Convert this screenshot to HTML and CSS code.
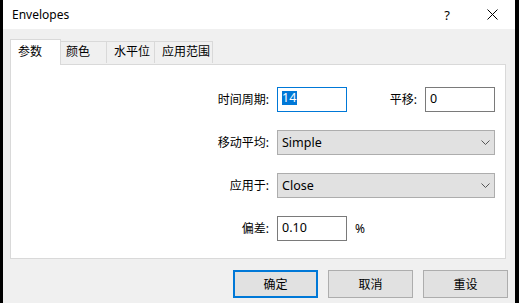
FILE: index.html
```html
<!DOCTYPE html>
<html>
<head>
<meta charset="utf-8">
<link rel="stylesheet" href="styles.css">
</head>
<body>
<div class="dialog">
  <div class="titlebar">
    <span class="title">Envelopes</span>
    <span class="help">?</span>
    <span class="close">
      <svg width="11" height="11" viewBox="0 0 11 11"><path d="M0.5 0.5L10.5 10.5M10.5 0.5L0.5 10.5" stroke="#000" stroke-width="1" fill="none"/></svg>
    </span>
  </div>
  <div class="body">
    <div class="tabs">
      <div class="tab active">参数</div>
      <div class="tab t-color">颜色</div>
      <div class="tab t-level">水平位</div>
      <div class="tab t-range">应用范围</div>
    </div>
    <div class="panel">
      <div class="form">
        <div class="label">时间周期:</div>
        <div class="row-split">
          <div class="input focus"><span class="sel">14</span></div>
          <div class="pair">
            <div class="label">平移:</div>
            <div class="input">0</div>
          </div>
        </div>

        <div class="label">移动平均:</div>
        <div class="select">
          <span>Simple</span>
          <svg width="9" height="5" viewBox="0 0 9 5"><path d="M0.5 0.5L4.5 4.5L8.5 0.5" stroke="#555" stroke-width="1" fill="none"/></svg>
        </div>

        <div class="label">应用于:</div>
        <div class="select">
          <span>Close</span>
          <svg width="9" height="5" viewBox="0 0 9 5"><path d="M0.5 0.5L4.5 4.5L8.5 0.5" stroke="#555" stroke-width="1" fill="none"/></svg>
        </div>

        <div class="label">偏差:</div>
        <div class="row-left">
          <div class="input">0.10</div>
          <span class="unit">%</span>
        </div>
      </div>
    </div>
    <div class="buttons">
      <div class="btn default">确定</div>
      <div class="btn">取消</div>
      <div class="btn">重设</div>
    </div>
  </div>
</div>
</body>
</html>
```

FILE: styles.css
```css
html, body {
  margin: 0;
  padding: 0;
  background: #000;
  height: 303px;
  overflow: hidden;
}
body {
  font-family: "Noto Sans", "Noto Sans CJK SC", sans-serif;
  font-size: 12px;
  color: #000;
}
.dialog {
  margin-left: 3px;
  width: 512px;
  height: 303px;
  background: #f0f0f0;
}
.titlebar {
  height: 29px;
  background: #fff;
  display: flex;
  align-items: center;
}
.title {
  padding-left: 9px;
  flex: 1;
  line-height: 16px;
  padding-top: 1px;
}
.help {
  width: 46px;
  text-align: center;
  font-size: 13px;
  line-height: 16px;
}
.close {
  width: 45px;
  display: flex;
  justify-content: center;
  align-items: center;
}
.body {
  padding: 9px 9px 0 7px;
}
.tabs {
  display: flex;
  align-items: flex-end;
  height: 26px;
}
.tab {
  height: 22px;
  box-sizing: border-box;
  border: 1px solid #d9d9d9;
  border-bottom: none;
  border-left: none;
  background: #f0f0f0;
  padding-left: 5px;
  line-height: 20px;
  margin-bottom: 1px;
}
.tab.active {
  height: 26px;
  width: 51px;
  background: #fff;
  border-left: 1px solid #d9d9d9;
  padding-left: 7px;
  line-height: 24px;
  margin-bottom: -1px;
  position: relative;
  z-index: 1;
}
.t-color { width: 46px; }
.t-level { width: 48px; padding-left: 7px; }
.t-range { width: 58px; padding-left: 7px; }
.panel {
  height: 195px;
  box-sizing: border-box;
  background: #fff;
  border: 1px solid #d9d9d9;
  padding-top: 22px;
}
.form {
  display: grid;
  grid-template-columns: 258px 218px;
  column-gap: 8px;
  row-gap: 18px;
  grid-auto-rows: 25px;
}
.form > .form-row { display: contents; }
.label {
  text-align: right;
  align-self: center;
  line-height: 16px;
}
.input {
  width: 70px;
  height: 25px;
  box-sizing: border-box;
  border: 1px solid #7a7a7a;
  background: #fff;
  padding-left: 4px;
  line-height: 22px;
  font-size: 12.5px;
}
.input.focus {
  border-color: #0078d7;
}
.sel {
  background: #0078d7;
  color: #fff;
  display: inline-block;
  line-height: 14px;
  padding: 0 1px 0 0;
  vertical-align: 1px;
}
.row-split {
  display: flex;
  justify-content: space-between;
}
.pair {
  display: flex;
  align-items: center;
  gap: 8px;
}
.row-left {
  display: flex;
  align-items: center;
  gap: 8px;
}
.unit {
  line-height: 16px;
}
.select {
  height: 25px;
  box-sizing: border-box;
  border: 1px solid #adadad;
  background: #e1e1e1;
  display: flex;
  align-items: center;
  justify-content: space-between;
  padding: 0 4px 0 4px;
  font-size: 12.5px;
}
.buttons {
  display: flex;
  justify-content: flex-end;
  gap: 10px;
  margin-top: 11px;
  margin-right: -2px;
}
.btn {
  width: 85px;
  height: 28px;
  box-sizing: border-box;
  border: 1px solid #adadad;
  background: #e1e1e1;
  display: flex;
  align-items: center;
  justify-content: center;
}
.btn.default {
  border: 2px solid #0078d7;
}
```
